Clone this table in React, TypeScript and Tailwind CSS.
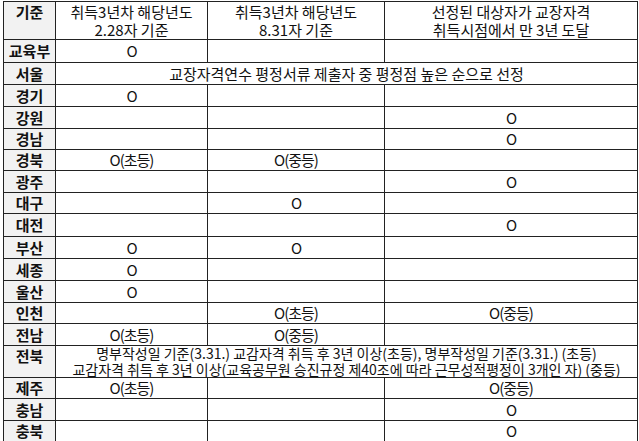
const font = { fontFamily: '"Noto Sans CJK KR", "Noto Sans", sans-serif' };

type Row = {
  region: string;
  h: string;
  cells?: [string, string, string];
  span?: string[];
};

const rows: Row[] = [
  { region: '교육부', h: 'h-[22px]', cells: ['O', '', ''] },
  { region: '서울', h: 'h-[21px]', span: ['교장자격연수 평정서류 제출자 중 평정점 높은 순으로 선정'] },
  { region: '경기', h: 'h-[21px]', cells: ['O', '', ''] },
  { region: '강원', h: 'h-[21px]', cells: ['', '', 'O'] },
  { region: '경남', h: 'h-[20px]', cells: ['', '', 'O'] },
  { region: '경북', h: 'h-[20px]', cells: ['O(초등)', 'O(중등)', ''] },
  { region: '광주', h: 'h-[21px]', cells: ['', '', 'O'] },
  { region: '대구', h: 'h-[20px]', cells: ['', 'O', ''] },
  { region: '대전', h: 'h-[22px]', cells: ['', '', 'O'] },
  { region: '부산', h: 'h-[21px]', cells: ['O', 'O', ''] },
  { region: '세종', h: 'h-[21px]', cells: ['O', '', ''] },
  { region: '울산', h: 'h-[21px]', cells: ['O', '', ''] },
  { region: '인천', h: 'h-[20px]', cells: ['', 'O(초등)', 'O(중등)'] },
  { region: '전남', h: 'h-[21px]', cells: ['O(초등)', 'O(중등)', ''] },
  {
    region: '전북',
    h: 'h-[31px]',
    span: [
      '명부작성일 기준(3.31.) 교감자격 취득 후 3년 이상(초등), 명부작성일 기준(3.31.) (초등)',
      '교감자격 취득 후 3년 이상(교육공무원 승진규정 제40조에 따라 근무성적평정이 3개인 자) (중등)',
    ],
  },
  { region: '제주', h: 'h-[20px]', cells: ['O(초등)', '', 'O(중등)'] },
  { region: '충남', h: 'h-[21px]', cells: ['', '', 'O'] },
  { region: '충북', h: 'h-[20px]', cells: ['', '', 'O'] },
];

export default function App() {
  return (
    <div className="w-[639px] h-[441px] overflow-hidden bg-white pt-px pl-[3px]" style={font}>
      <div className="grid w-[635px] grid-cols-[51px_151px_176px_252px] gap-px bg-[#222] p-px text-[#111]">
        {/* header */}
        <div className="flex h-[37px] justify-center bg-[#f2f2f2] pt-[1px] text-[15px] font-bold leading-[18px]">
          기준
        </div>
        <div className="flex flex-col items-center justify-center bg-white text-[15px] leading-[18px]">
          <span>취득3년차 해당년도</span>
          <span>2.28자 기준</span>
        </div>
        <div className="flex flex-col items-center justify-center bg-white text-[15px] leading-[18px]">
          <span>취득3년차 해당년도</span>
          <span>8.31자 기준</span>
        </div>
        <div className="flex flex-col items-center justify-center bg-white text-[15px] leading-[18px]">
          <span>선정된 대상자가 교장자격</span>
          <span>취득시점에서 만 3년 도달</span>
        </div>

        {rows.map((r) => (
          <Line key={r.region} row={r} />
        ))}
      </div>
    </div>
  );
}

function Line({ row }: { row: Row }) {
  const top = row.span && row.span.length > 1;
  return (
    <>
      <div
        className={`flex ${row.h} justify-center bg-[#f2f2f2] text-[15px] font-bold leading-[20px] ${
          top ? 'items-start' : 'items-center'
        }`}
      >
        {row.region}
      </div>
      {row.span ? (
        <div
          className={`col-span-3 flex flex-col items-center justify-center bg-white whitespace-nowrap ${
            top ? 'text-[14px] leading-[15.5px]' : 'text-[15px] leading-[20px]'
          }`}
        >
          {row.span.map((t) => (
            <span key={t}>{t}</span>
          ))}
        </div>
      ) : (
        row.cells!.map((c, i) => (
          <div
            key={i}
            className="flex items-center justify-center bg-white text-[15px] leading-[20px] tracking-[-1px]"
          >
            {c}
          </div>
        ))
      )}
    </>
  );
}
